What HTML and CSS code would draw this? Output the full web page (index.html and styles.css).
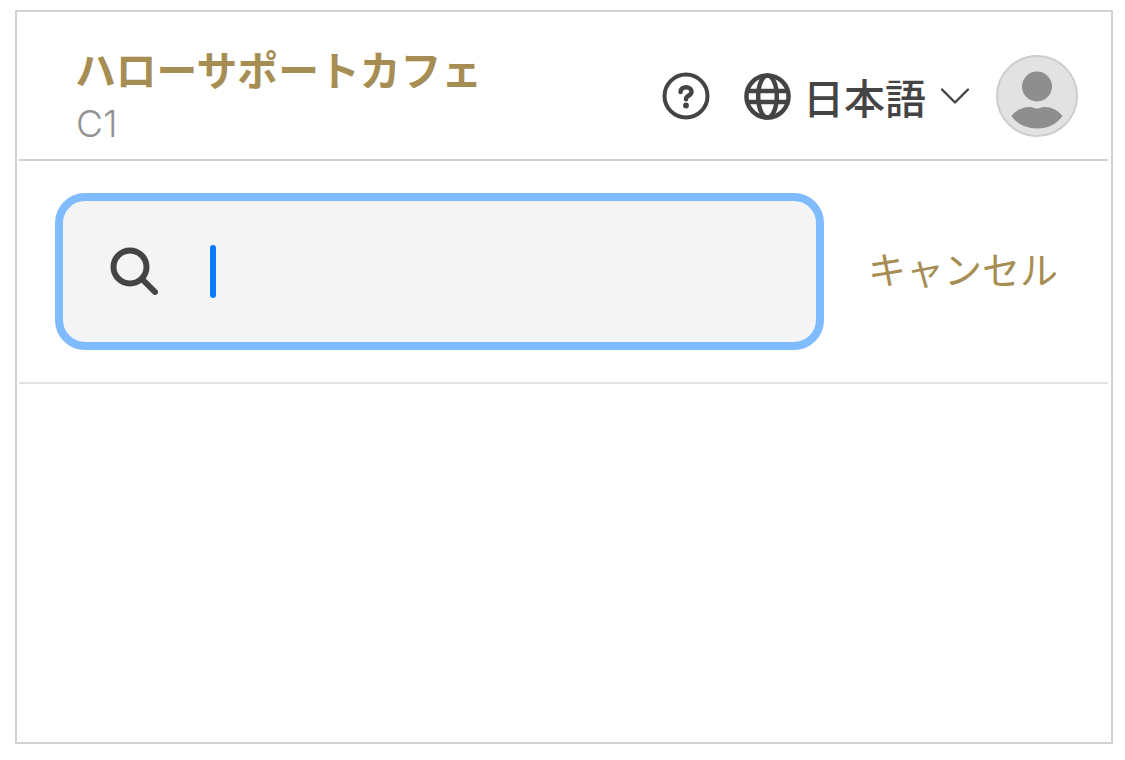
FILE: index.html
```html
<!DOCTYPE html>
<html lang="ja">

<head>
    <meta charset="utf-8" />
    <title>ハローサポートカフェ</title>
    <link rel="stylesheet" href="styles.css">
</head>

<body>
    <div id="app">
        <header class="header">
            <div class="shop">
                <span class="shop-name">ハローサポートカフェ</span>
                <span class="shop-table">C1</span>
            </div>
            <div class="actions">
                <svg class="icon-help" viewBox="0 0 48 48" fill="none" stroke="#444" stroke-width="4" stroke-linecap="round">
                    <circle cx="24" cy="24" r="21.5" />
                    <path d="M18.500 20c0-3 2.500-4.800 5.500-4.800s5.500 2 5.500 4.500c0 2-1.200 3-3 4-1.600.9-2.500 1.600-2.500 3.500" stroke-width="4.500" />
                    <circle cx="24" cy="33.500" r="2.900" fill="#444" stroke="none" />
                </svg>
                <div class="language">
                    <svg class="icon-globe" viewBox="0 0 48 48" fill="none" stroke="#444" stroke-width="4.600">
                        <circle cx="24" cy="24" r="21.500" />
                        <ellipse cx="24" cy="24" rx="9.500" ry="21.500" />
                        <path d="M4 18.500h40M4 29.500h40" />
                    </svg>
                    <span class="language-name">日本語</span>
                    <svg class="icon-chevron" viewBox="0 0 30 18" fill="none" stroke="#444" stroke-width="2.400" stroke-linecap="round" stroke-linejoin="round">
                        <path d="M2 2.500l13 13 13-13" />
                    </svg>
                </div>
                <div class="avatar">
                    <svg viewBox="0 0 78 78">
                        <circle cx="39" cy="29.500" r="15" fill="#8e8e8e" />
                        <path d="M13.500 59C18 53 25 50 31 50c4 0 5 1.500 8 1.500s4-1.500 8-1.500c6 0 13 3 17.500 9C59 67 50 71.500 39 71.500S19 67 13.500 59z" fill="#8e8e8e" />
                    </svg>
                </div>
            </div>
        </header>
        <div class="search-row">
            <div class="search-box">
                <svg class="icon-search" viewBox="0 0 48 48" fill="none" stroke="#444" stroke-width="6" stroke-linecap="round">
                    <circle cx="20" cy="20" r="16.500" />
                    <path d="M32.500 32.500L45 45" />
                </svg>
                <span class="caret"></span>
            </div>
            <span class="cancel">キャンセル</span>
        </div>
    </div>
</body>

</html>
```

FILE: styles.css
```css
body {
    padding: 0;
    margin: 0;
    background-color: #fff;
    font-family: "Noto Sans CJK JP", "Noto Sans", sans-serif;
}

#app {
    box-sizing: border-box;
    width: 1098px;
    height: 734px;
    margin: 10px 0 0 15px;
    padding: 0 3px 0 2px;
    border: 2px solid #d2d2d2;
    background-color: #fff;
}

.header {
    display: flex;
    align-items: center;
    justify-content: space-between;
    box-sizing: border-box;
    height: 149px;
    padding: 0 30px 0 56px;
    border-bottom: 2px solid #d2d2d2;
}

.shop {
    display: flex;
    flex-direction: column;
    margin-top: 16px;
}

.shop-name {
    color: #a68d53;
    font-size: 40.8px;
    font-weight: 700;
    line-height: 60px;
}

.shop-table {
    margin-left: 1px;
    color: #929292;
    font-family: Inter, sans-serif;
    font-size: 37px;
    font-weight: 300;
    line-height: 50px;
}

.actions {
    display: flex;
    align-items: center;
    margin-top: 21px;
}

.icon-help {
    width: 48px;
    height: 48px;
    margin-right: 34px;
}

.language {
    display: flex;
    align-items: center;
}

.icon-globe {
    width: 47px;
    height: 47px;
    margin-right: 12px;
}

.language-name {
    color: #444;
    font-size: 41px;
    font-weight: 500;
    line-height: 48px;
}

.icon-chevron {
    width: 30px;
    height: 18px;
    margin: 0 26px 0 14px;
}

.avatar {
    box-sizing: border-box;
    width: 82px;
    height: 82px;
    border: 2.500px solid #cdcdcd;
    border-radius: 50%;
    background-color: #e2e2e2;
    overflow: hidden;
}

.avatar svg {
    display: block;
    width: 100%;
    height: 100%;
}

.search-row {
    display: flex;
    align-items: center;
    box-sizing: border-box;
    height: 223px;
    padding: 0 0 0 36px;
    border-bottom: 2px solid #e2e2e2;
}

.search-box {
    display: flex;
    align-items: center;
    box-sizing: border-box;
    width: 769px;
    height: 157px;
    padding-left: 47px;
    border: 8px solid #7fbbff;
    border-radius: 30px;
    background-color: #f4f4f4;
}

.icon-search {
    width: 48px;
    height: 48px;
    margin-top: -2px;
}

.caret {
    width: 6px;
    height: 53px;
    margin-left: 52px;
    border-radius: 3px;
    background-color: #0a7aff;
}

.cancel {
    margin-left: 44px;
    margin-bottom: 8px;
    color: #a68d53;
    font-size: 38px;
    line-height: 50px;
}
```
